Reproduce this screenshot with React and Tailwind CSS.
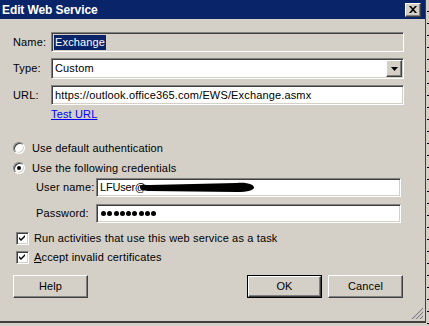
import React from "react"

const sunken =
  "border border-t-[#808080] border-l-[#808080] border-b-white border-r-white shadow-[inset_1px_1px_0_#404040,inset_-1px_-1px_0_#d4d0c8]"
const raised =
  "border border-t-white border-l-white border-b-[#404040] border-r-[#404040] shadow-[inset_-1px_-1px_0_#808080]"

function Radio({ checked }) {
  return (
    <div className="w-[12px] h-[12px] rounded-full border border-t-[#808080] border-l-[#808080] border-b-white border-r-white bg-white shadow-[inset_1px_1px_0_#404040,inset_-1px_-1px_0_#d4d0c8] flex items-center justify-center">
      {checked && <div className="w-[4px] h-[4px] rounded-full bg-black" />}
    </div>
  )
}

function Check() {
  return (
    <div className={`w-[13px] h-[13px] bg-white flex items-center justify-center ${sunken}`}>
      <svg width="7" height="7" viewBox="0 0 7 7">
        <path d="M0 2 L2 4 L6 0 L6 2 L2 6 L0 4 Z" fill="#000" />
      </svg>
    </div>
  )
}

export default function App() {
  return (
    <div className="w-[429px] h-[326px] bg-[#d4d0c8] flex overflow-hidden font-['Liberation_Sans',Arial,sans-serif] text-[11px] tracking-[0.15px] text-black leading-none">
      {/* dialog */}
      <div className="w-[426px] h-[323px] flex flex-col border-r border-b-2 border-r-[#404040] border-b-[#404040]">
        {/* title bar */}
        <div className="h-[19px] bg-[#0a246a] flex items-center justify-between pl-[2px] pr-[4px]">
          <span className="text-white font-bold text-[12px] tracking-[-0.1px]">Edit Web Service</span>
          <div className={`w-[16px] h-[14px] bg-[#d4d0c8] flex items-center justify-center ${raised}`}>
            <svg width="8" height="7" viewBox="0 0 8 7">
              <path d="M0 0 L2 0 L4 2.3 L6 0 L8 0 L5 3.5 L8 7 L6 7 L4 4.7 L2 7 L0 7 L3 3.5 Z" fill="#000" />
            </svg>
          </div>
        </div>

        <div className="flex-1 flex flex-col pl-[13px]">
          {/* name */}
          <div className="flex items-center mt-[13px] h-[20px]">
            <span className="w-[38px]">Name:</span>
            <div className={`w-[353px] h-[20px] bg-[#d4d0c8] flex items-center pl-[2px] ${sunken}`}>
              <span className="bg-[#0a246a] text-white px-[1px] py-[2px]">Exchange</span>
            </div>
          </div>

          {/* type */}
          <div className="flex items-center mt-[6px] h-[21px]">
            <span className="w-[38px]">Type:</span>
            <div className={`w-[353px] h-[21px] bg-white flex items-center justify-between pl-[3px] pr-[1px] ${sunken}`}>
              <span>Custom</span>
              <div className={`w-[16px] h-[17px] bg-[#d4d0c8] flex items-center justify-center ${raised}`}>
                <svg width="7" height="4" viewBox="0 0 7 4">
                  <path d="M0 0 L7 0 L3.5 4 Z" fill="#000" />
                </svg>
              </div>
            </div>
          </div>

          {/* url */}
          <div className="flex items-center mt-[6px] h-[20px]">
            <span className="w-[38px]">URL:</span>
            <div className={`w-[353px] h-[20px] bg-white flex items-center pl-[3px] ${sunken}`}>
              <span>https://outlook.office365.com/EWS/Exchange.asmx</span>
            </div>
          </div>

          <div className="mt-[3px] h-[13px] pl-[38px] flex items-center">
            <span className="text-[#0000ff] underline">Test URL</span>
          </div>

          {/* auth */}
          <div className="flex items-center mt-[19px] h-[16px] gap-[7px]">
            <Radio />
            <span>Use default authentication</span>
          </div>
          <div className="flex items-center mt-[4px] h-[16px] gap-[7px]">
            <Radio checked />
            <span>Use the following credentials</span>
          </div>

          <div className="flex items-center mt-[2px] h-[19px] pl-[23px]">
            <span className="w-[60px]">User name:</span>
            <div className={`w-[305px] h-[19px] bg-white flex items-center pl-[3px] ${sunken}`}>
              <span className="tracking-[-0.2px]">LFUser@</span>
              <svg width="114" height="11" viewBox="0 0 118 11" preserveAspectRatio="none" className="-ml-[6px]">
                <path d="M0 4 C2 2 6 3 10 3 L100 1 C112 0 118 3 118 5.5 C118 8 112 10 100 10 L10 9 C5 9 1 8 0 6 Z" fill="#000" />
              </svg>
            </div>
          </div>
          <div className="flex items-center mt-[7px] h-[19px] pl-[23px]">
            <span className="w-[60px]">Password:</span>
            <div className={`w-[305px] h-[19px] bg-white flex items-center pl-[4px] gap-[1.25px] ${sunken}`}>
              {[0, 1, 2, 3, 4, 5, 6, 7, 8].map((i) => (
                <div key={i} className="w-[5px] h-[5px] rounded-full bg-black" />
              ))}
            </div>
          </div>

          {/* checkboxes */}
          <div className="flex items-center mt-[9px] h-[13px] pl-[3px] gap-[5px]">
            <Check />
            <span>Run activities that use this web service as a task</span>
          </div>
          <div className="flex items-center mt-[6px] h-[13px] pl-[3px] gap-[5px]">
            <Check />
            <span>
              <span className="underline">A</span>ccept invalid certificates
            </span>
          </div>

          {/* buttons */}
          <div className="flex items-center mt-[11px] h-[23px]">
            <button className={`w-[75px] h-[23px] bg-[#d4d0c8] ${raised}`}>Help</button>
            <div className="w-[159px]" />
            <div className="w-[75px] h-[23px] border border-black">
              <button className={`w-full h-full bg-[#d4d0c8] ${raised}`}>OK</button>
            </div>
            <button className={`ml-[6px] w-[75px] h-[23px] bg-[#d4d0c8] ${raised}`}>Cancel</button>
          </div>

          {/* grip */}
          <div className="flex-1 flex items-end justify-end pr-[2px] pb-[2px]">
            <svg width="12" height="12" viewBox="0 0 12 12">
              <path d="M11 1 L1 11 M11 5 L5 11 M11 9 L9 11" stroke="#fff" strokeWidth="1" />
              <path d="M12 1 L1 12 M12 5 L5 12 M12 9 L9 12" stroke="#808080" strokeWidth="1.2" />
            </svg>
          </div>
        </div>
      </div>

      {/* background strip to the right */}
      <div className="w-[3px] h-[326px] border-l border-l-[#d4d0c8] bg-[repeating-linear-gradient(to_bottom,#d4d0c8_0px,#d4d0c8_11px,#000_11px,#000_12px)]" />
    </div>
  )
}
